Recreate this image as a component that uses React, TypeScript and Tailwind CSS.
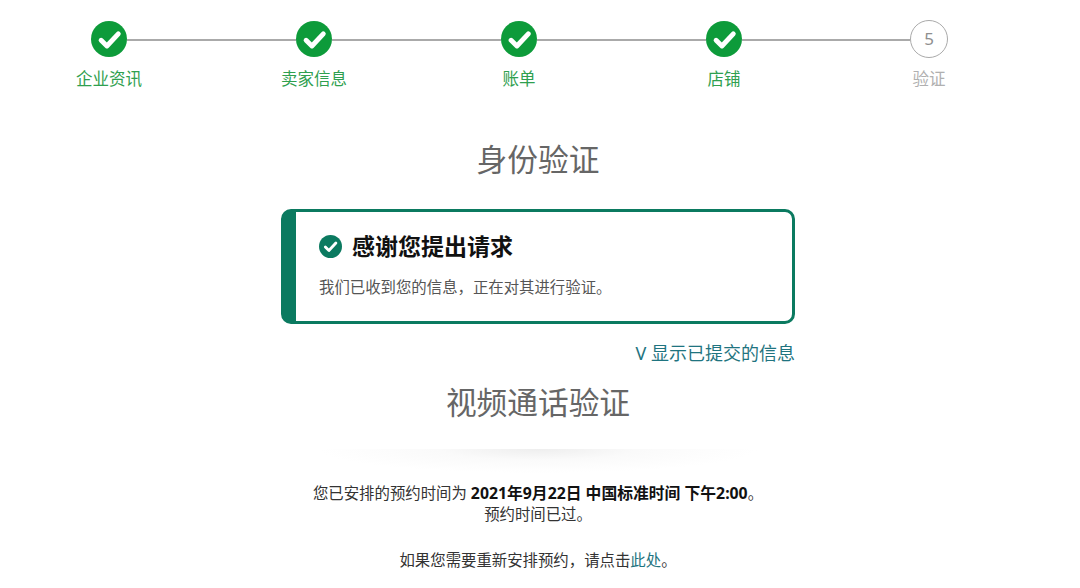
const FONT = "font-['Noto_Sans','Noto_Sans_CJK_SC','Liberation_Sans',sans-serif]";

function Check({ size, stroke }: { size: number; stroke: number }) {
  return (
    <svg width={size} height={size} viewBox="0 0 24 24" fill="none">
      <path d="M5.5 12.6 L10 17 L18.8 7.6" stroke="#fff" strokeWidth={stroke} strokeLinecap="round" strokeLinejoin="round" />
    </svg>
  );
}

function Step({ label }: { label: string }) {
  return (
    <div className="flex w-9 flex-col items-center">
      <div className="flex h-9 w-9 items-center justify-center rounded-full bg-[#0d9b3a]">
        <Check size={31} stroke={3.8} />
      </div>
      <div className="mt-[10px] whitespace-nowrap text-[16.5px] leading-[24px] text-[#2fa04f]">{label}</div>
    </div>
  );
}

function Line() {
  return <div className="mt-[17.5px] h-[2px] flex-1 bg-[#aaaaaa]" />;
}

export default function App() {
  return (
    <div className={`${FONT} h-[588px] w-[1080px] overflow-hidden bg-white`}>
      <div className="flex pl-[91px] pr-[132px] pt-[21px]">
        <Step label="企业资讯" />
        <Line />
        <Step label="卖家信息" />
        <Line />
        <Step label="账单" />
        <Line />
        <Step label="店铺" />
        <div className="mt-[17.5px] h-[2px] w-[168px] bg-[#aaaaaa]" />
        <div className="-my-px flex w-[38px] flex-col items-center">
          <div className="flex h-[38px] w-[38px] items-center justify-center rounded-full border border-[#aaaaaa] text-[17px] text-[#8f8f8f]">5</div>
          <div className="mt-[9px] whitespace-nowrap text-[16.5px] leading-[24px] text-[#b0b0b0]">验证</div>
        </div>
      </div>

      <div className="w-[1076px]">
        <h1 className="mt-[45px] text-center text-[30.7px] leading-[46px] font-normal text-[#666666]">身份验证</h1>

        <div className="mx-auto mt-[27px] h-[115px] w-[514px] rounded-[10px] border-[3px] border-l-[15px] border-[#0b7a60] pl-[23px] pt-[17px]">
          <div className="flex items-center gap-[10px]">
            <div className="flex h-[23px] w-[23px] items-center justify-center rounded-full bg-[#0b7a60]">
              <Check size={19} stroke={3.6} />
            </div>
            <div className="text-[23px] leading-[34px] font-bold text-[#111111]">感谢您提出请求</div>
          </div>
          <div className="mt-[14px] text-[15.4px] leading-[22px] text-[#555555]">我们已收到您的信息，正在对其进行验证。</div>
        </div>

        <div className="mx-auto mt-[16px] w-[514px] text-right text-[18px] leading-[26px] text-[#1f7480]">V 显示已提交的信息</div>

        <h2 className="mt-[13px] text-center text-[30.7px] leading-[46px] font-normal text-[#666666]">视频通话验证</h2>

        <div className="mx-auto mt-[24px] h-[24px] w-[440px] bg-[radial-gradient(ellipse_50%_100%_at_50%_0%,#eeeeee_0%,#fafafa_45%,#ffffff_100%)]" />

        <div className="mt-[10px] text-center text-[15.4px] leading-[21px] text-[#333333]">
          <p>
            您已安排的预约时间为 <span className="text-[15.8px] font-bold text-[#111111]">2021年9月22日 中国标准时间 下午2:00</span>。
          </p>
          <p>预约时间已过。</p>
          <p className="mt-[25px]">
            如果您需要重新安排预约，请点击<span className="text-[#1f7480]">此处</span>。
          </p>
        </div>
      </div>
    </div>
  );
}
